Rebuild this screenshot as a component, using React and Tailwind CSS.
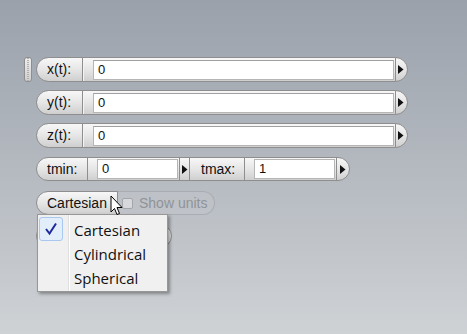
import React from "react";

const pill =
  "bg-gradient-to-b from-[#f7f7f7] via-[#e6e6e6] to-[#cfcfcf] border border-[#8e8e8e]";

function ArrowRight() {
  return (
    <svg width="7" height="11" viewBox="0 0 7 11">
      <path d="M1 1 L6.5 5.5 L1 10 Z" fill="#111" />
    </svg>
  );
}

function ExprRow({ label, value, grip }) {
  return (
    <div className="flex items-center h-[25px]">
      <div className="w-[12px] h-[25px] flex items-stretch">
        {grip && (
          <div className="w-[8px] h-[25px] rounded-[3px] border border-[#8e8e8e] bg-gradient-to-b from-[#eeeeee] to-[#cfcfcf] flex justify-center">
            <div className="w-[2px] h-full border-x border-dotted border-[#b0b0b0]" />
          </div>
        )}
      </div>
      <div className={`flex items-stretch h-[25px] w-[372px] rounded-full ${pill}`}>
        <div className="w-[46px] pl-[10px] flex items-center border-r border-[#8e8e8e] shadow-[1px_0_0_#f4f4f4] text-[14px] text-[#111]">
          {label}
        </div>
        <div className="flex-1 flex items-center pl-[10px] pr-[1px]">
          <div className="h-[20px] w-full bg-white border border-[#b5b5b5] border-t-[#a0a0a0] pl-[4px] flex items-center text-[13px] text-[#111]">
            {value}
          </div>
        </div>
        <div className="w-[12px] border-l border-[#8e8e8e] rounded-r-full flex items-center justify-center pr-[2px]">
          <ArrowRight />
        </div>
      </div>
    </div>
  );
}

export default function App() {
  return (
    <div
      className="relative w-[467px] h-[334px] overflow-hidden bg-gradient-to-b from-[#9aa1ab] to-[#cfd2d5]"
      style={{ fontFamily: "'Liberation Sans', Tahoma, sans-serif" }}
    >
      <div className="pt-[57px] pl-[24px] flex flex-col">
        <div className="flex flex-col gap-[8px]">
          <ExprRow label="x(t):" value="0" grip />
          <ExprRow label="y(t):" value="0" />
          <ExprRow label="z(t):" value="0" />
        </div>

        {/* tmin / tmax */}
        <div className="mt-[9px] ml-[12px] flex">
          <div className={`flex items-stretch h-[24px] w-[314px] rounded-full ${pill}`}>
            <div className="w-[51px] pl-[10px] flex items-center border-r border-[#8e8e8e] text-[14px] text-[#111]">
              tmin:
            </div>
            <div className="flex items-center pl-[9px]">
              <div className="h-[20px] w-[81px] bg-white border border-[#b5b5b5] pl-[4px] flex items-center text-[13px] text-[#111]">
                0
              </div>
            </div>
            <div className="w-[11px] ml-[1px] border-x border-[#8e8e8e] flex items-center justify-center">
              <ArrowRight />
            </div>
            <div className="w-[53px] pl-[9px] ml-[2px] flex items-center border-r border-[#8e8e8e] text-[14px] text-[#111]">
              tmax:
            </div>
            <div className="flex items-center pl-[9px]">
              <div className="h-[20px] w-[81px] bg-white border border-[#b5b5b5] pl-[4px] flex items-center text-[13px] text-[#111]">
                1
              </div>
            </div>
            <div className="flex-1 ml-[1px] border-l border-[#8e8e8e] rounded-r-full flex items-center justify-center pr-[2px]">
              <ArrowRight />
            </div>
          </div>
        </div>

        {/* coordinate system */}
        <div className="mt-[10px] ml-[12px] flex h-[24px]">
          <div className={`w-[82px] rounded-l-full flex items-center pl-[10px] text-[14px] text-[#111] ${pill}`}>
            Cartesian
            <svg className="ml-[5px]" width="10" height="7" viewBox="0 0 10 7">
              <path d="M0 0.5 L10 0.5 L5 6.5 Z" fill="#222" />
            </svg>
          </div>
          <div className="w-[97px] rounded-r-full border border-l-0 border-[#a9adb2] bg-[#c6c9cd]/40 flex items-center pl-[4px] text-[14px] text-[#8f9398]">
            <div className="w-[11px] h-[11px] border border-[#a3a7ac] rounded-[2px] bg-[#d6d8db] mr-[6px]" />
            Show units
          </div>
        </div>

        {/* hidden pill behind menu */}
        <div className="mt-[9px] ml-[12px] flex h-[24px]">
          <div className={`w-[136px] rounded-full ${pill}`} />
        </div>
      </div>

      {/* dropdown menu */}
      <div className="absolute left-[37px] top-[214px] w-[131px] h-[78px] bg-[#f0f0f0] border border-[#979797] shadow-[2px_2px_3px_rgba(0,0,0,0.35)] flex">
        <div className="w-[31px] border-r border-[#e0e0e0] shadow-[1px_0_0_#ffffff] pt-[2px] pl-[1px]">
          <div className="w-[24px] h-[24px] rounded-[3px] border border-[#a8c8ef] bg-[#e3eefb] flex items-center justify-center">
            <svg width="14" height="14" viewBox="0 0 14 14">
              <path d="M2 7 L5.5 11.5 L12 1.5" fill="none" stroke="#1f2a9c" strokeWidth="2" />
            </svg>
          </div>
        </div>
        <div
          className="flex flex-col pl-[5px] text-[15px] text-[#111] leading-[24px] pt-[3px]"
          style={{ fontFamily: "'Open Sans', 'Noto Sans', sans-serif" }}
        >
          <div>Cartesian</div>
          <div>Cylindrical</div>
          <div>Spherical</div>
        </div>
      </div>

      {/* mouse cursor */}
      <svg className="absolute left-[110px] top-[195px]" width="14" height="22" viewBox="0 0 14 22">
        <path
          d="M1 1 L1 17 L4.5 13.5 L7 19.5 L9.5 18.5 L7 12.5 L12 12.5 Z"
          fill="#fff"
          stroke="#000"
          strokeWidth="1"
          strokeLinejoin="round"
        />
      </svg>
    </div>
  );
}
